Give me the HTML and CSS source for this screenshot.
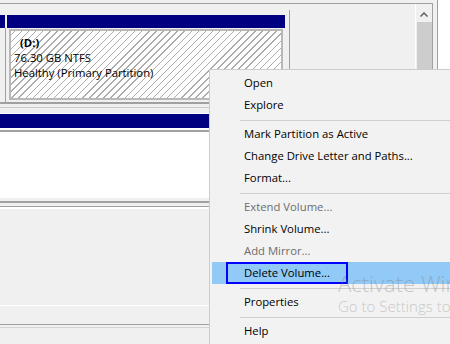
FILE: index.html
```html
<!DOCTYPE html>
<html>
<head>
<link rel="stylesheet" href="styles.css">
</head>
<body>
<div class="console">
  <div class="view">
    <div class="disks">
      <div class="disk-one">
        <div class="stub">
          <div class="bar stub-bar"></div>
          <div class="stub-body"></div>
        </div>
        <div class="part">
          <div class="bar"></div>
          <div class="part-body">
            <div class="hatch">
              <div class="vol-name">(D:)</div>
              <div>76.30 GB NTFS</div>
              <div>Healthy (Primary Partition)</div>
            </div>
          </div>
        </div>
      </div>
      <div class="disk-two">
        <div class="part-two">
          <div class="bar bar-two"></div>
          <div class="blank"></div>
        </div>
      </div>
      <div class="rule"></div>
      <div class="legend"></div>
      <div class="status"></div>
    </div>
    <div class="scroll">
      <svg class="arrow" width="8" height="5" viewBox="0 0 8 5">
        <polyline points="0.5,4.5 4,1 7.5,4.5" fill="none" stroke="#606060" stroke-width="1.5"/>
      </svg>
      <div class="thumb"></div>
    </div>
  </div>
  <div class="edge"></div>
</div>

<!-- context menu for the selected volume -->
<div class="menu">
  <div class="item">Open</div>
  <div class="item">Explore</div>
  <div class="sep"></div>
  <div class="item">Mark Partition as Active</div>
  <div class="item">Change Drive Letter and Paths...</div>
  <div class="item">Format...</div>
  <div class="sep"></div>
  <div class="item disabled">Extend Volume...</div>
  <div class="item">Shrink Volume...</div>
  <div class="item disabled">Add Mirror...</div>
  <div class="item selected"><span class="focus">Delete Volume...</span></div>
  <div class="sep"></div>
  <div class="item">Properties</div>
  <div class="sep"></div>
  <div class="item">Help</div>
</div>

<div class="watermark">
  <div class="wm-title">Activate Windows</div>
  <div class="wm-sub">Go to Settings to activate Windows.</div>
</div>
</body>
</html>
```

FILE: styles.css
```css
html, body
{
  width: 100%;
  height: 100%;
  margin: 0;
  padding: 0;
  overflow: hidden;
  background-color: #f0f0f0;
  font-family: "Open Sans", "Noto Sans", sans-serif;
  font-size: 11.3px;
  color: #000;
}

.console
{
  display: flex;
  height: 100%;
}

.view
{
  display: flex;
  width: 432px;
  margin-top: 3px;
  border-top: 1px solid #a0a0a0;
  border-right: 1px solid #a0a0a0;
}

.edge
{
  flex: 1;
  background: linear-gradient(to right, #f0f0f0 4px, #a0a0a0 4px, #a0a0a0 5px, #fff 5px);
}

.disks
{
  display: flex;
  flex-direction: column;
  width: 415px;
}

/* first disk row */
.disk-one
{
  display: flex;
  width: 289px;
  margin-top: 6px;
  padding-top: 5px;
  border-right: 1px solid #a0a0a0;
  border-bottom: 2px solid #a0a0a0;
}

.bar
{
  height: 13px;
  background-color: #000080;
}

.stub
{
  display: flex;
  flex-direction: column;
  width: 6px;
}

.stub-bar
{
  width: 5px;
}

.stub-body
{
  flex: 1;
  border-right: 1px solid #a0a0a0;
}

.part
{
  width: 278px;
  margin-left: 1px;
}

.part-body
{
  padding: 1px 2px 2px 2px;
}

.hatch
{
  height: 63px;
  padding: 4px 0 0 3px;
  border: 2px solid #b8b8b8;
  line-height: 15px;
  background: repeating-linear-gradient(-45deg, #ababab 0px, #ababab 1px, #fff 1px, #fff 5px);
}

.vol-name
{
  padding-left: 6px;
  font-weight: bold;
}

/* second disk row */
.disk-two
{
  width: 289px;
  margin-top: 3px;
  padding: 5px 0 3px 0;
  border-top: 1px solid #c8c8c8;
}

.part-two
{
  border-top: 1px solid #fff;
}

.bar-two
{
  height: 14px;
  border-bottom: 2px solid #fff;
}

.blank
{
  height: 66px;
  background-color: #fff;
  border-top: 2px solid #a0a0a0;
}

.rule
{
  height: 3px;
  border-top: 2px solid #a0a0a0;
  border-bottom: 1px solid #a0a0a0;
  box-shadow: 0 2px 0 #fff;
}

.legend
{
  height: 98px;
  border-bottom: 1px solid #fff;
}

.status
{
  height: 2px;
  margin-top: 18px;
  border-top: 1px solid #a0a0a0;
  border-bottom: 1px solid #d5d5d5;
}

.scroll
{
  display: flex;
  flex-direction: column;
  width: 16px;
  border-left: 1px solid #fff;
}

.arrow
{
  display: block;
  margin: 8px auto 0 auto;
}

.thumb
{
  flex: 1;
  margin: 5px 0 0 1px;
  background-color: #cdcdcd;
}

/* context menu, it runs on past the window's right and bottom edges */
.menu
{
  position: absolute;
  left: 209px;
  top: 69px;
  right: 0;
  bottom: 0;
  padding: 2px 0 0 2px;
  border-left: 1px solid #cccccc;
  border-top: 1px solid #cccccc;
  background-color: #f2f2f2;
  overflow: hidden;
}

.item
{
  height: 22px;
  line-height: 22px;
  padding-left: 32px;
  white-space: nowrap;
}

.disabled
{
  color: #6d6d6d;
}

.selected
{
  background-color: #91c9f7;
}

.focus
{
  display: inline-block;
  box-sizing: border-box;
  height: 22px;
  line-height: 18px;
  margin-left: -18px;
  padding: 0 16px;
  border: 2px solid #0000ff;
}

.sep
{
  height: 3px;
  padding-top: 4px;
  margin-left: 28px;
}

.sep::before
{
  content: "";
  display: block;
  border-top: 1px solid #d0d0d0;
}

/* activation watermark, clipped by the window edge */
.watermark
{
  position: absolute;
  left: 338px;
  top: 270px;
  right: 0;
  overflow: hidden;
  white-space: nowrap;
  font-weight: 300;
  color: rgba(128, 128, 128, 0.4);
}

.wm-title
{
  font-size: 22px;
  line-height: 26px;
}

.wm-sub
{
  font-size: 15px;
  line-height: 20px;
}
```
